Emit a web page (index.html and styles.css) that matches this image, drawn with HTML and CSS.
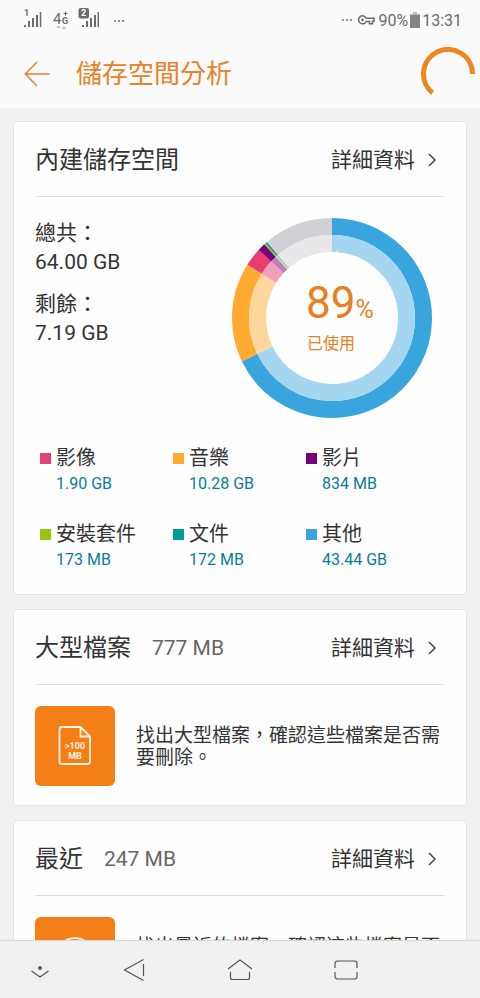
FILE: index.html
```html
<!DOCTYPE html>
<html lang="zh-Hant">
<head>
<meta charset="utf-8">
<meta name="viewport" content="width=device-width, initial-scale=1">
<title>儲存空間分析</title>
<link rel="stylesheet" href="styles.css">
</head>
<body>
<div class="status">
  <svg class="signals" width="104" height="24" viewBox="0 0 104 24" aria-hidden="true">
    <g fill="#6b6b6b">
      <rect x="0" y="17" width="2" height="2"/><rect x="4" y="13" width="2" height="6"/><rect x="8" y="10" width="2" height="9"/><rect x="12" y="7" width="2" height="12"/><rect x="15.800" y="4" width="1.500" height="15"/>
      <rect x="58" y="17" width="2" height="2"/><rect x="62" y="13" width="2" height="6"/><rect x="66" y="10" width="2" height="9"/><rect x="70" y="7" width="2" height="12"/><rect x="73.500" y="4" width="1.500" height="15"/>
      <rect x="54.500" y="0" width="10.500" height="10.500" rx="2"/>
      <circle cx="91" cy="13" r="1"/><circle cx="95" cy="13" r="1"/><circle cx="99" cy="13" r="1"/>
    </g>
    <path d="M32 18h5l-2.500 3zM37.500 21h5l-2.500-3z" fill="#c4c4c4"/>
    <path d="M39.500 5.500h4M41.500 3.500v4" stroke="#6b6b6b" fill="none"/>
    <text class="sig-num" x="0" y="8">1</text>
    <text class="sig-num sig-inv" x="57" y="8">2</text>
    <text class="sig-4" x="29" y="16">4</text>
    <text class="sig-g" x="38" y="16">G</text>
  </svg>
  <div class="status-right">
    <svg width="36" height="16" viewBox="0 0 36 16" aria-hidden="true">
      <g fill="#6b6b6b"><circle cx="3" cy="8" r="1"/><circle cx="7" cy="8" r="1"/><circle cx="11" cy="8" r="1"/></g>
      <path d="M26.200 6.200H34v3h-1.500v2.600h-3V9.500h-3.300a4 4 0 1 1 0-3.300z" fill="none" stroke="#6b6b6b" stroke-width="1.500"/>
      <circle cx="22.500" cy="7.900" r="1.300" fill="#6b6b6b"/>
    </svg>
    <span class="percent">90%</span>
    <svg width="10" height="18" viewBox="0 0 10 18" aria-hidden="true"><path d="M3 1h4v2h3v3H0V3h3z" fill="#b5b5b5"/><path d="M0 4h10v13H0z" fill="#858585"/></svg>
    <span>13:31</span>
  </div>
</div>

<header class="appbar">
  <button class="back" aria-label="返回">
    <svg width="26" height="26" viewBox="0 0 26 26"><path d="M25.500 13H1.500M13 1 1.300 13 13 25" fill="none" stroke="#e8822a" stroke-width="1.500"/></svg>
  </button>
  <h1>儲存空間分析</h1>
  <svg class="spinner" width="54" height="54" viewBox="0 0 54 54" role="img" aria-label="載入中"><path d="M51.500 27A24.500 24.500 0 1 0 11.500 45.900" fill="none" stroke="#f08420" stroke-width="5"/></svg>
</header>

<main>
  <section class="card">
    <div class="card-head">
      <h2>內建儲存空間</h2>
      <a class="more" href="#internal">詳細資料<svg width="8" height="14" viewBox="0 0 8 14"><path d="m1 1 6 6-6 6"/></svg></a>
    </div>
    <div class="overview">
      <dl class="totals">
        <div><dt>總共：</dt><dd>64.00 GB</dd></div>
        <div><dt>剩餘：</dt><dd>7.19 GB</dd></div>
      </dl>
      <div class="chart">
        <svg width="200" height="200" viewBox="0 0 200 200" aria-hidden="true">
          <g class="ring" transform="rotate(-90 100 100)">
            <g stroke-width="17">
              <circle cx="100" cy="100" r="91.500" pathLength="64000" stroke="#39a5de" stroke-dasharray="43440 20560"/>
              <circle cx="100" cy="100" r="91.500" pathLength="64000" stroke="#ffaa30" stroke-dasharray="10280 53720" stroke-dashoffset="-43440"/>
              <circle cx="100" cy="100" r="91.500" pathLength="64000" stroke="#e63e70" stroke-dasharray="1900 62100" stroke-dashoffset="-53720"/>
              <circle cx="100" cy="100" r="91.500" pathLength="64000" stroke="#780078" stroke-dasharray="810 63190" stroke-dashoffset="-55620"/>
              <circle cx="100" cy="100" r="91.500" pathLength="64000" stroke="#98c412" stroke-dasharray="180 63820" stroke-dashoffset="-56430"/>
              <circle cx="100" cy="100" r="91.500" pathLength="64000" stroke="#009b94" stroke-dasharray="180 63820" stroke-dashoffset="-56610"/>
              <circle cx="100" cy="100" r="91.500" pathLength="64000" stroke="#d0d0d5" stroke-dasharray="7210 56790" stroke-dashoffset="-56790"/>
            </g>
            <g stroke-width="17">
              <circle cx="100" cy="100" r="74.500" pathLength="64000" stroke="#a4d6ef" stroke-dasharray="43440 20560"/>
              <circle cx="100" cy="100" r="74.500" pathLength="64000" stroke="#ffd69c" stroke-dasharray="10280 53720" stroke-dashoffset="-43440"/>
              <circle cx="100" cy="100" r="74.500" pathLength="64000" stroke="#f49fb9" stroke-dasharray="1900 62100" stroke-dashoffset="-53720"/>
              <circle cx="100" cy="100" r="74.500" pathLength="64000" stroke="#bb80bb" stroke-dasharray="810 63190" stroke-dashoffset="-55620"/>
              <circle cx="100" cy="100" r="74.500" pathLength="64000" stroke="#cbe18a" stroke-dasharray="180 63820" stroke-dashoffset="-56430"/>
              <circle cx="100" cy="100" r="74.500" pathLength="64000" stroke="#80cdc6" stroke-dasharray="180 63820" stroke-dashoffset="-56610"/>
              <circle cx="100" cy="100" r="74.500" pathLength="64000" stroke="#e8e8ea" stroke-dasharray="7210 56790" stroke-dashoffset="-56790"/>
            </g>
          </g>
        </svg>
        <div class="used">
          <div class="used-value">89<small>%</small></div>
          <div class="used-label">已使用</div>
        </div>
      </div>
    </div>
    <dl class="legend">
      <div class="image"><dt>影像</dt><dd>1.90 GB</dd></div>
      <div class="music"><dt>音樂</dt><dd>10.28 GB</dd></div>
      <div class="video"><dt>影片</dt><dd>834 MB</dd></div>
      <div class="apk"><dt>安裝套件</dt><dd>173 MB</dd></div>
      <div class="doc"><dt>文件</dt><dd>172 MB</dd></div>
      <div class="other"><dt>其他</dt><dd>43.44 GB</dd></div>
    </dl>
  </section>

  <section class="card">
    <div class="card-head">
      <h2>大型檔案</h2><span class="size">777 MB</span>
      <a class="more" href="#large">詳細資料<svg width="8" height="14" viewBox="0 0 8 14"><path d="m1 1 6 6-6 6"/></svg></a>
    </div>
    <div class="tip">
      <svg class="tile" width="80" height="80" viewBox="0 0 80 80" aria-hidden="true">
        <path d="M45.500 21H27a2.500 2.500 0 0 0-2.500 2.500v32A2.500 2.500 0 0 0 27 58h25.500a2.500 2.500 0 0 0 2.500-2.500V30.500zV30.500H55" fill="none" stroke="#fff3e4" stroke-width="1.800" stroke-linejoin="round"/>
        <text x="40" y="43">&gt;100</text><text x="40" y="53">MB</text>
      </svg>
      <p>找出大型檔案，確認這些檔案是否需要刪除。</p>
    </div>
  </section>

  <section class="card">
    <div class="card-head">
      <h2>最近</h2><span class="size">247 MB</span>
      <a class="more" href="#recent">詳細資料<svg width="8" height="14" viewBox="0 0 8 14"><path d="m1 1 6 6-6 6"/></svg></a>
    </div>
    <div class="tip">
      <svg class="tile" width="80" height="80" viewBox="0 0 80 80" aria-hidden="true"><circle cx="40" cy="40" r="19" fill="none" stroke="#fff3e4" stroke-width="2"/><path d="M40 28v12l8 5" fill="none" stroke="#fff3e4" stroke-width="2"/></svg>
      <p>找出最近的檔案，確認這些檔案是否需要刪除。</p>
    </div>
  </section>
</main>

<nav class="navbar">
  <button aria-label="隱藏"><svg width="20" height="24" viewBox="0 0 20 24"><circle cx="10" cy="10" r="2" fill="#555"/><path d="m1.500 13 8.500 6 8.500-6"/></svg></button>
  <button aria-label="返回"><svg width="22" height="24" viewBox="0 0 22 24"><path d="M20.500 1.500 1.500 12l19 10.500M20.500 6v12"/></svg></button>
  <button aria-label="主畫面"><svg width="26" height="24" viewBox="0 0 26 24"><path d="M1 11 13 2l12 9M3.500 14v5.500a2 2 0 0 0 2 2h15a2 2 0 0 0 2-2V14"/></svg></button>
  <button aria-label="最近使用"><svg width="24" height="24" viewBox="0 0 24 24"><path d="M1 10V5.500a2.500 2.500 0 0 1 2.500-2.500h17A2.500 2.500 0 0 1 23 5.500V10M1 14v4.500A2.500 2.500 0 0 0 3.500 21h17a2.500 2.500 0 0 0 2.500-2.500V14"/></svg></button>
</nav>
</body>
</html>
```

FILE: styles.css
```css
* {
  box-sizing: border-box;
  margin: 0;
  padding: 0;
}

body {
  display: flex;
  flex-direction: column;
  height: 100vh;
  overflow: hidden;
  background: #f1f1f1;
  color: #333;
  font-family: Roboto, "Noto Sans CJK TC", sans-serif;
  font-weight: 400;
}

h1, h2 {
  font-weight: 400;
}

svg {
  display: block;
  flex: none;
}

button {
  display: grid;
  place-items: center;
  border: 0;
  background: none;
}

.status {
  display: flex;
  flex: none;
  justify-content: space-between;
  align-items: center;
  height: 40px;
  padding: 0 18px 0 24px;
  background: #fafafa;
  color: #6b6b6b;
  font-size: 16px;
}

.status text {
  fill: #6b6b6b;
}

.status .sig-num {
  font-size: 9px;
  font-weight: 700;
}

.status .sig-inv {
  fill: #fff;
}

.status .sig-4 {
  font-size: 15px;
}

.status .sig-g {
  font-size: 9px;
  font-weight: 700;
}

.status-right {
  display: flex;
  align-items: center;
  gap: 2px;
}

.appbar {
  display: flex;
  flex: none;
  align-items: center;
  height: 68px;
  padding: 0 5px 0 24px;
  background: #fafafa;
  color: #e8822a;
}

.appbar h1 {
  flex: 1;
  margin-left: 26px;
  font-size: 26px;
  line-height: 40px;
}

main {
  flex: 1;
  min-height: 0;
  overflow: hidden;
  padding: 13px;
}

.card {
  margin-bottom: 14px;
  padding: 0 21px 19px;
  border: 1px solid #e4e4e4;
  border-radius: 4px;
  background: #fefefe;
}

.card-head {
  display: flex;
  align-items: center;
  height: 75px;
  padding-top: 2px;
  border-bottom: 1px solid #dedede;
}

.card-head h2 {
  font-size: 24px;
  line-height: 36px;
}

.size {
  margin-left: 21px;
  color: #666;
  font-size: 21px;
}

.more {
  display: flex;
  align-items: center;
  gap: 13px;
  margin-left: auto;
  padding-right: 9px;
  color: #333;
  font-size: 21px;
  line-height: 32px;
  text-decoration: none;
}

.more path {
  fill: none;
  stroke: #444;
  stroke-width: 1.5;
}

.overview {
  display: flex;
  justify-content: space-between;
  padding: 21px 13px 0 0;
}

.totals {
  display: grid;
  align-content: start;
  gap: 13px;
  padding-top: 1px;
  font-size: 21px;
  line-height: 29px;
}

.chart {
  display: grid;
}

.chart > * {
  grid-area: 1 / 1;
}

.ring {
  fill: none;
}

.used {
  place-self: center;
  padding-left: 16px;
  color: #e8801f;
}

.used-value {
  font-size: 44px;
  line-height: 44px;
}

.used-value small {
  font-size: 25px;
}

.used-label {
  padding-left: 1px;
  font-size: 16px;
  line-height: 24px;
}

.legend {
  display: grid;
  grid-template-columns: repeat(3, 1fr);
  row-gap: 24px;
  margin: 26px 6px 3px 5px;
}

.legend > div {
  display: grid;
  grid-template-columns: 11px 1fr;
  column-gap: 5px;
  align-items: center;
}

.legend > div::before {
  content: "";
  height: 11px;
  background: var(--swatch);
}

.legend dt {
  font-size: 20px;
  line-height: 28px;
}

.legend dd {
  grid-column: 2;
  color: #087c9c;
  font-size: 16px;
  line-height: 24px;
}

.image { --swatch: #e04476; }
.music { --swatch: #ffaa30; }
.video { --swatch: #780078; }
.apk { --swatch: #98c412; }
.doc { --swatch: #009b94; }
.other { --swatch: #39a5de; }

.tip {
  display: flex;
  align-items: center;
  gap: 21px;
  padding-top: 21px;
}

.tip p {
  padding-top: 2px;
  font-size: 19px;
  line-height: 22px;
}

.tile {
  border-radius: 6px;
  background: #f57f17;
}

.tile text {
  fill: #fff3e4;
  font-size: 9px;
  font-weight: 700;
  text-anchor: middle;
}

.navbar {
  display: grid;
  flex: none;
  grid-template-columns: 79fr 106fr 106fr 106fr 81fr;
  grid-template-columns: 80fr 106fr 106fr 106fr 80fr;
  height: 58px;
  border-top: 1px solid #d8d8d8;
  background: #f1f1f1;
}

.navbar path {
  fill: none;
  stroke: #555;
  stroke-width: 1.2;
}
```
